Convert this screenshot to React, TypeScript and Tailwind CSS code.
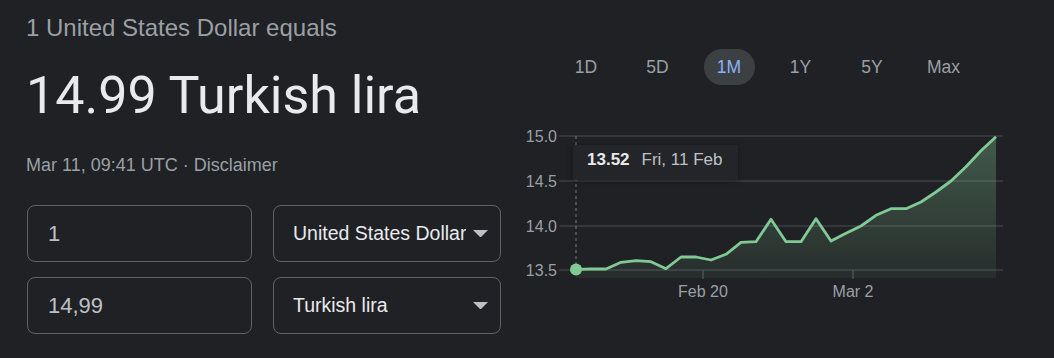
import React from 'react';

const ranges = ['1D', '5D', '1M', '1Y', '5Y', 'Max'];

const ys = [
  269.3, 269, 269, 262.3, 260.7, 261.7, 268.7, 257, 257, 260, 254.3, 242.3, 241.7, 219.3, 241.7,
  241.7, 218.7, 241, 233.3, 226, 215.3, 208.7, 208.7, 202, 192, 181, 166.7, 150.7, 136.7,
];

const pts = ys.map((y, i) => [576 + 15 * i, y] as const);
const linePath = pts.map(([x, y], i) => `${i ? 'L' : 'M'}${x} ${y}`).join(' ');
const fillPath = `${linePath} L996 278 L576 278 Z`;

function Chart() {
  const grid = [
    { y: 136, label: '15.0' },
    { y: 181, label: '14.5' },
    { y: 226, label: '14.0' },
    { y: 270, label: '13.5' },
  ];
  return (
    <svg width={534} height={273} viewBox="520 85 534 273" className="block">
      <defs>
        <linearGradient id="fill" x1="0" y1="0" x2="0" y2="1">
          <stop offset="0%" stopColor="#81c995" stopOpacity={0.34} />
          <stop offset="100%" stopColor="#81c995" stopOpacity={0.07} />
        </linearGradient>
      </defs>
      {grid.map(g => (
        <g key={g.label}>
          <line x1={559} x2={1003} y1={g.y} y2={g.y} stroke="#3c4043" strokeWidth={1.5} />
          <text x={557} y={g.y + 5.5} textAnchor="end" fontSize={16} fill="#9aa0a6" fontFamily="'Liberation Sans', Arial, sans-serif">
            {g.label}
          </text>
        </g>
      ))}
      <path d={fillPath} fill="url(#fill)" />
      <line x1={703} x2={703} y1={270} y2={279} stroke="#5f6368" />
      <line x1={853} x2={853} y1={270} y2={279} stroke="#5f6368" />
      <text x={703} y={297} textAnchor="middle" fontSize={16} fill="#9aa0a6" fontFamily="'Liberation Sans', Arial, sans-serif">Feb 20</text>
      <text x={853} y={297} textAnchor="middle" fontSize={16} fill="#9aa0a6" fontFamily="'Liberation Sans', Arial, sans-serif">Mar 2</text>
      <line x1={576} x2={576} y1={136} y2={270} stroke="#9aa0a6" strokeOpacity={0.7} strokeDasharray="3 3" />
      <path d={linePath} fill="none" stroke="#81c995" strokeWidth={2.8} strokeLinejoin="round" />
      <circle cx={576} cy={269.5} r={6} fill="#81c995" />
    </svg>
  );
}

function Caret() {
  return (
    <svg width={15} height={7.5} viewBox="0 0 16 8" className="shrink-0">
      <path d="M0 0h16L8 8z" fill="#bdc1c6" />
    </svg>
  );
}

export default function App() {
  return (
    <div className="w-[1054px] h-[358px] bg-[#202124] flex overflow-hidden font-['Liberation_Sans',Arial,sans-serif]">
      <div className="w-[520px] shrink-0 pl-[26px] pt-[14px]">
        <p className="text-[24px] leading-[28px] text-[#9aa0a6]">1 United States Dollar equals</p>
        <p className="mt-[24px] text-[52px] leading-[60px] text-[#e8eaed] font-['Roboto',sans-serif]">14.99 Turkish lira</p>
        <p className="mt-[27px] text-[18px] leading-[24px] text-[#9aa0a6]">
          Mar 11, 09:41 UTC · <span>Disclaimer</span>
        </p>
        <div className="mt-[28px] pl-[1px] flex flex-col gap-[15px]">
          {[
            { amount: '1', currency: 'United States Dollar' },
            { amount: '14,99', currency: 'Turkish lira' },
          ].map(row => (
            <div key={row.currency} className="flex gap-[21px]">
              <div className="w-[225px] h-[57px] rounded-lg border border-[#5f6368] flex items-center pl-[20px] text-[22px] text-[#bdc1c6]">
                {row.amount}
              </div>
              <div className="w-[228px] h-[57px] rounded-lg border border-[#5f6368] flex items-center justify-between pl-[19px] pr-[12px] text-[19.5px] text-[#e8eaed]">
                <span className="whitespace-nowrap overflow-hidden">{row.currency}</span>
                <Caret />
              </div>
            </div>
          ))}
        </div>
      </div>

      <div className="flex-1 pt-[49px]">
        <div className="flex gap-[20.5px] pl-[40.5px]">
          {ranges.map(r => (
            <div
              key={r}
              className={`w-[51px] h-[36px] rounded-full flex items-center justify-center text-[17.5px] ${r === '1M' ? 'bg-[#3c4043] text-[#8ab4f8]' : 'text-[#9aa0a6]'}`}
            >
              {r}
            </div>
          ))}
        </div>
        <div className="relative">
          <Chart />
          <div className="absolute left-[53px] top-[60px] w-[165px] h-[35px] bg-[#242528] shadow-[0_1px_6px_rgba(0,0,0,0.35)] pl-[14px] pt-[5px] leading-[20px] text-[17px] whitespace-nowrap">
            <span className="font-bold text-[#e8eaed]">13.52</span>
            <span className="ml-[12px] text-[#bdc1c6]">Fri, 11 Feb</span>
          </div>
        </div>
      </div>
    </div>
  );
}
